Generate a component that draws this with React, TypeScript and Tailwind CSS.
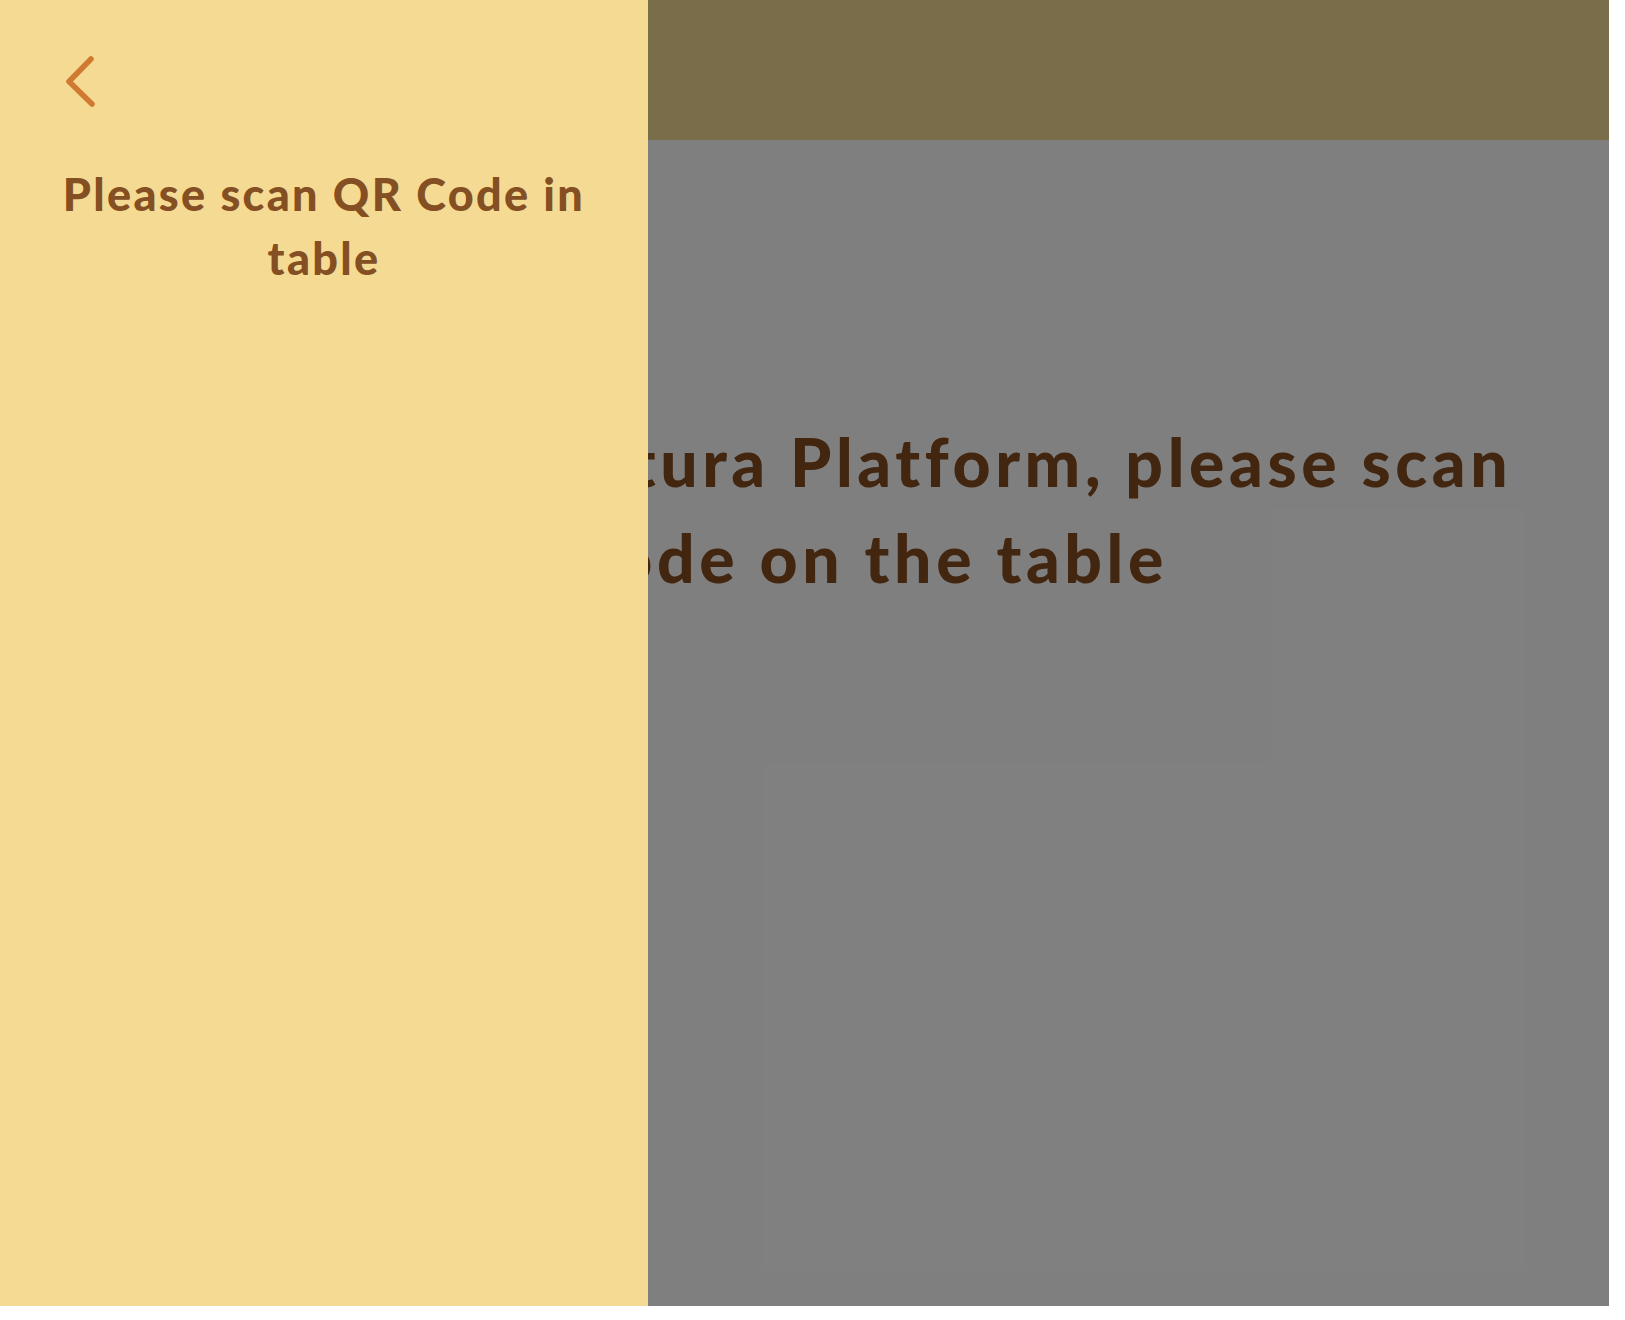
import React from 'react';

export default function App() {
    return (
        <div className="relative w-[1609px] h-[1306px] overflow-hidden font-['Lato','Noto_Sans',sans-serif]">
            {/* Page underneath */}
            <div className="flex flex-col w-full h-full">
                <header className="h-[140px] bg-[#f5da92] shrink-0" />
                <main className="flex-1 bg-white pt-[274px] px-[40px]">
                    <h1 className="text-center text-[66px] leading-[96px] font-black tracking-[4.6px] whitespace-nowrap text-[#864c1f]">
                        Welcome to Cultura Platform, please scan
                        <br />
                        QR Code on the table
                    </h1>
                </main>
            </div>

            {/* Backdrop */}
            <div className="absolute inset-0 bg-black/50" />

            {/* Drawer */}
            <aside className="absolute left-0 top-0 h-full w-[648px] bg-[#f5da93] flex flex-col pt-[54px] px-[40px]">
                <button className="w-[32px] h-[56px] ml-[24px]" aria-label="Back">
                    <svg width="32" height="56" viewBox="0 0 32 56" fill="none">
                        <path
                            d="M27 5 L5 27.5 L28 50"
                            stroke="#cf7a30"
                            strokeWidth="5.5"
                            strokeLinecap="round"
                            strokeLinejoin="round"
                        />
                    </svg>
                </button>
                <h2 className="mt-[52px] text-center text-[45px] leading-[64px] font-black tracking-[2.3px] whitespace-nowrap text-[#844f22]">
                    Please scan QR Code in
                    <br />
                    table
                </h2>
            </aside>
        </div>
    );
}
